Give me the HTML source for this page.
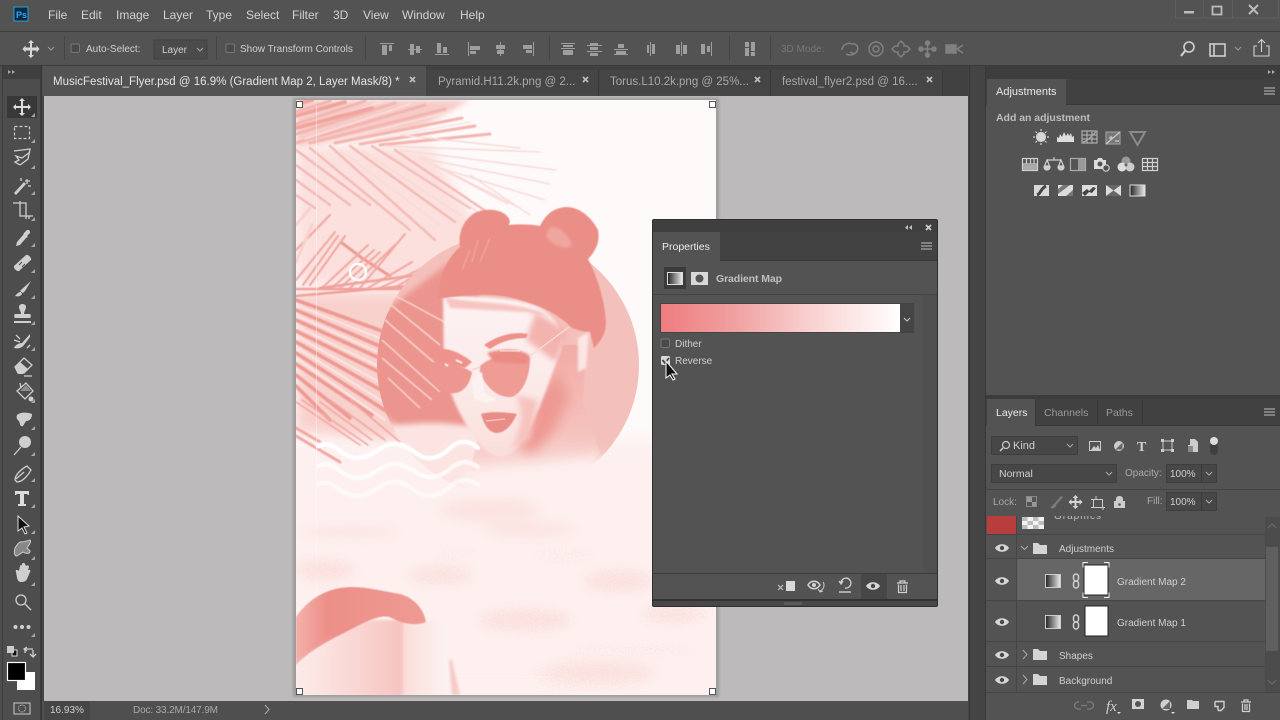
<!DOCTYPE html>
<html><head><meta charset="utf-8"><title>Photoshop</title>
<style>
html,body{margin:0;padding:0;background:#535353;width:1280px;height:720px;overflow:hidden}
svg{display:block;position:absolute;left:0;top:0;filter:blur(.3px)}
text{font-family:"Liberation Sans",sans-serif;font-size:10px;fill:#cfcfcf}
.m{font-size:12px;fill:#d2d2d2}
.t{font-size:11.5px;fill:#a8a8a8}
.i{fill:none;stroke:#cfcfcf;stroke-width:1.3}
.f{fill:#cfcfcf;stroke:none}
</style></head><body>
<svg width="1280" height="720" viewBox="0 0 1280 720" xmlns="http://www.w3.org/2000/svg">
<defs>
<filter id="b1" x="-20%" y="-20%" width="140%" height="140%"><feGaussianBlur stdDeviation="1.200"/></filter>
<filter id="b2" x="-30%" y="-30%" width="160%" height="160%"><feGaussianBlur stdDeviation="3"/></filter>
<filter id="b5" x="-50%" y="-50%" width="200%" height="200%"><feGaussianBlur stdDeviation="6"/></filter>
<filter id="b9" x="-50%" y="-50%" width="200%" height="200%"><feGaussianBlur stdDeviation="10"/></filter>
<filter id="s" x="-10%" y="-10%" width="120%" height="120%"><feGaussianBlur stdDeviation=".5"/></filter>
<filter id="sp" x="-40%" y="-60%" width="180%" height="220%">
<feGaussianBlur in="SourceAlpha" stdDeviation="5" result="a"/>
<feTurbulence type="fractalNoise" baseFrequency=".6" numOctaves="2" seed="4" result="n"/>
<feColorMatrix in="n" type="matrix" values="0 0 0 0 .96  0 0 0 0 .74  0 0 0 0 .72  0 0 5 0 -2.300" result="c"/>
<feComposite in="c" in2="a" operator="in"/>
</filter>
<linearGradient id="gm" x1="0" x2="1" y1="0" y2="0"><stop offset="0" stop-color="#f07c7f"/><stop offset=".3" stop-color="#f0a0a0"/><stop offset=".65" stop-color="#fad4d4"/><stop offset="1" stop-color="#fff"/></linearGradient>
<linearGradient id="gr" x1="0" x2="1" y1="0" y2="0"><stop offset="0" stop-color="#222"/><stop offset="1" stop-color="#eee"/></linearGradient>
<linearGradient id="arm" x1="0" x2="1" y1="0" y2="0"><stop offset="0" stop-color="#f4b0aa"/><stop offset=".25" stop-color="#ec8f88"/><stop offset="1" stop-color="#ee9b94"/></linearGradient>
<linearGradient id="leg" x1="0" x2="1" y1="0" y2="0"><stop offset="0" stop-color="#fdeceb"/><stop offset=".45" stop-color="#f9d3cf"/><stop offset=".7" stop-color="#f6c4bf"/><stop offset=".72" stop-color="#fbdedb"/><stop offset="1" stop-color="#fdf2f1"/></linearGradient>
<linearGradient id="face" x1="0" x2="0" y1="0" y2="1"><stop offset="0" stop-color="#fdf3f3"/><stop offset=".5" stop-color="#fcebea"/><stop offset="1" stop-color="#fadfdc"/></linearGradient>
<linearGradient id="neck" x1="0" x2="0" y1="0" y2="1"><stop offset="0" stop-color="#f2aca6"/><stop offset=".6" stop-color="#f5c2bd"/><stop offset="1" stop-color="#fde9e7"/></linearGradient>
<clipPath id="doc"><rect x="296" y="100" width="420" height="595"/></clipPath>
<clipPath id="circ"><circle cx="508" cy="365" r="131"/></clipPath>
<symbol id="eye" viewBox="0 0 14 10" overflow="visible"><path d="M0 5C3 0 11 0 14 5C11 10 3 10 0 5Z" fill="#d8d8d8"/><circle cx="7" cy="5" r="2.2" fill="#4a4a4a"/></symbol>
<symbol id="dot" viewBox="0 0 4 4"><path d="M4 0V4H0Z" fill="#a8a8a8"/></symbol>
</defs>

<!-- chrome backgrounds -->
<rect width="1280" height="720" fill="#535353"/>
<rect y="31" width="1280" height="1" fill="#3d3d3d"/>
<rect y="65" width="1280" height="1" fill="#3a3a3a"/>
<rect y="66" width="1280" height="30" fill="#414141"/>
<rect x="43" y="66" width="383" height="30" fill="#535353"/>
<rect x="426" y="70" width="173" height="26" fill="#454545"/>
<rect x="599" y="70" width="172" height="26" fill="#454545"/>
<rect x="771" y="70" width="172" height="26" fill="#454545"/>
<path d="M598.5 70V96M770.5 70V96M942.5 70V96" stroke="#383838"/>
<rect x="0" y="66" width="43" height="654" fill="#4d4d4d"/>
<rect x="2" y="66" width="1" height="654" fill="#3c3c3c"/>
<rect x="40" y="66" width="2" height="654" fill="#3a3a3a"/>
<rect x="3" y="66" width="37" height="13" fill="#3f3f3f"/>
<path d="M8 70l3 2-3 2zM12 70l3 2-3 2z" fill="#a8a8a8"/>

<!-- canvas -->
<rect x="44" y="96" width="924" height="605" fill="#bcbabb"/>
<rect x="42" y="96" width="2" height="605" fill="#454545"/>
<rect x="968" y="66" width="18" height="654" fill="#444"/>
<rect x="969" y="66" width="1" height="654" fill="#383838"/>
<rect x="985" y="66" width="1" height="654" fill="#383838"/>
<rect x="986" y="66" width="294" height="13" fill="#3d3d3d"/>
<path d="M1268 70l3 2-3 2zM1272 70l3 2-3 2z" fill="#a8a8a8"/>

<!-- document -->
<rect x="293" y="98" width="426" height="599" fill="#9c9c9c" filter="url(#b1)"/>
<g clip-path="url(#doc)">
<rect x="296" y="100" width="420" height="595" fill="#fefafa"/>
<rect x="280" y="440" width="450" height="270" fill="#fdf0ef" filter="url(#b9)"/>
<!-- palm wash -->
<path d="M296 100H470L420 128L296 148Z" fill="#f7cbc7" filter="url(#b2)"/>
<path d="M296 146H430L480 230L440 285H296Z" fill="#fbe0de" filter="url(#b5)"/>
<path d="M296 292H440V425L390 440L296 432Z" fill="#f8d0cc" filter="url(#b5)"/>
<!-- frond top -->
<g fill="none" stroke-linecap="round" filter="url(#s)">
<path stroke="#f3b5b0" stroke-width="3" d="M296 112L330 101M296 124L365 101M296 134L395 103M296 143L425 105M310 143L445 109M335 143L462 118M360 144L475 126M380 145L490 134"/>
<path stroke="#fbe3e1" stroke-width="1.300" d="M296 118L350 101M296 129L382 102M305 139L410 104M325 143L450 112M350 144L470 122"/>
<path stroke="#f8dbd8" stroke-width="1.600" d="M385 146L540 152M400 150L556 170M420 158L550 184M440 168L545 200M400 135L520 148"/>
<path stroke="#f1a49e" stroke-width="4" d="M296 104L312 100M296 116L345 102M296 128L372 108"/>
<path stroke="#f4bab5" stroke-width="2.400" d="M296 150L370 205M296 165L350 205M310 148L410 230M330 146L435 240M350 146L455 222M372 146L470 208M395 150L490 214M296 180L330 205M296 195L315 208"/>
<path stroke="#fad9d6" stroke-width="1.400" d="M420 158L508 204M445 170L520 208M470 175L530 215M340 150L440 225M362 150L460 215M385 152L478 212"/>
</g>
<!-- mid frond -->
<g fill="none" stroke="#f1a7a1" stroke-linecap="round" filter="url(#s)">
<path stroke-width="3" stroke="#ee9a93" d="M342 243L362 258L390 276"/>
<path stroke-width="2" d="M296 250L330 215M296 280L335 232M303 285L338 236M310 285L345 236M322 288L368 245M332 288L374 250M340 288L380 252M350 288L395 245M360 288L405 234M368 288L412 262M380 288L440 260M394 288L460 250M405 288L440 278"/>
<path stroke-width="3" stroke="#f8d2cf" d="M296 225L310 208M296 262L312 225"/>
</g>
<!-- low frond -->
<g fill="none" stroke="#ee9a93" stroke-linecap="round" filter="url(#s)">
<path stroke-width="2.500" stroke="#f0a19b" d="M296 289H440M296 296L440 283M320 288L440 272"/>
<path stroke-width="3.600" d="M296 300L440 352M296 310L440 372M296 320L445 388M296 331L440 402M296 342L430 418M296 353L400 420M296 364L372 415M296 375L350 418M296 386L330 420"/>
<path stroke-width="2" stroke="#fbe5e3" d="M296 305L440 362M296 315L440 380M296 326L440 396M296 336L430 410M296 347L420 425M296 358L385 420"/>
<path stroke-width="1.600" stroke="#f1a7a1" d="M296 402L360 445M302 400L368 445M320 402L372 440M330 400L385 440M350 400L400 442"/>
<path stroke-width="3" stroke="#f1a7a1" d="M296 428L320 442M296 436L340 462"/>
</g>
<rect x="316" y="105" width="1" height="560" fill="#fff" opacity=".4"/>
<rect x="316" y="676" width="240" height="1" fill="#fff" opacity=".3"/>
<!-- circle -->
<circle cx="508" cy="365" r="131" fill="#f4c0bb"/>
<g clip-path="url(#circ)">
<path d="M450 262L372 320V405L400 428H470L480 270Z" fill="#ec958e" filter="url(#b2)"/>
<g stroke="#f8d4d1" stroke-width="1.500" fill="none" filter="url(#s)"><path d="M385 300L440 345M385 320L445 372M382 340L440 392M382 358L432 400M388 378L420 408M396 296L450 325"/></g>
<path d="M370 430C410 420 470 420 500 436L510 500H370Z" fill="#fbe4e2" filter="url(#b2)"/>
</g>
<circle cx="358" cy="272" r="8" fill="none" stroke="#fff" stroke-width="2.400" opacity=".95"/>
<!-- neck / chest -->
<path d="M530 345L586 345L583 400L600 453L575 478L520 490L470 470L478 440L510 430Z" fill="url(#neck)" filter="url(#s)"/>
<path d="M470 470L600 456L640 475V510H440Z" fill="#fdf0ef" filter="url(#b5)"/>
<path d="M532 454L552 434L570 398L558 372L532 400L518 446Z" fill="#ee9a93" filter="url(#b5)"/>
<!-- face -->
<path d="M443 294C470 298 515 296 540 308C556 318 566 332 560 352C548 385 535 425 517 448C505 462 490 458 478 442C460 418 450 395 444 370Z" fill="url(#face)" filter="url(#b1)"/>
<path d="M445 297C470 304 520 300 548 316L525 312L450 308Z" fill="#f6c5c1" filter="url(#b1)"/>
<path d="M536 312L568 332L556 362L526 340Z" fill="#f3b4af" filter="url(#b2)"/>
<path d="M515 395C525 410 522 430 510 450L530 440L538 400Z" fill="#f6c3be" filter="url(#b2)"/>
<!-- hair -->
<path d="M438 298C440 275 447 258 460 247C458 235 462 222 473 214C482 208 500 208 507 216C511 220 510 224 508 225C518 224 530 224 540 226C545 216 552 208 566 207C580 207 592 218 598 230C600 240 597 250 588 259C596 275 604 295 606 322C606 334 600 342 594 348L590 332C582 332 578 330 572 328C560 316 545 307 520 300C495 292 465 295 445 298Z" fill="#eb8e87" filter="url(#s)"/>
<path d="M549 228C556 224 568 232 572 246C564 250 553 246 546 236Z" fill="#f3b0aa" opacity=".7" filter="url(#b1)"/>
<path d="M472 262L478 240M480 262L490 238M462 270L470 250" stroke="#f2aaa4" stroke-width="1.200" fill="none" filter="url(#s)"/>
<!-- eyes/brow -->
<path d="M484 345C496 336 514 331 528 334L526 338C512 338 500 342 490 349Z" fill="#ee9189" filter="url(#s)"/>
<path d="M433 350C445 346 460 352 472 362L465 368L440 362Z" fill="#ee938c" filter="url(#s)"/>
<!-- glasses -->
<path d="M480 366C495 352 520 355 530 358C530 375 524 392 512 397C498 398 486 388 480 372Z" fill="#ef9c95" filter="url(#s)"/>
<path d="M428 364C440 358 460 365 472 372C470 385 462 395 450 393C438 392 430 378 428 364Z" fill="#ee9690" filter="url(#s)"/>
<path d="M487 353C498 349 520 347 530 356L527 364L494 362Z" fill="#ea8b84" filter="url(#b1)"/>
<path d="M530 356L569 327" stroke="#f9dbd8" stroke-width="1.300"/>
<path d="M472 370L480 367" stroke="#f8d8d5" stroke-width="2"/>
<path d="M500 351H520" stroke="#fff" stroke-width=".8"/>
<path d="M456 360l6 3M445 364l3 2" stroke="#fff" stroke-width="1.800" filter="url(#s)"/>
<!-- nose + lips -->
<path d="M472 378L482 372L484 392L497 400L485 403L474 398Z" fill="#fdf2f2" filter="url(#s)"/>
<path d="M481 414C490 411 505 412 517 414C512 425 505 433 496 433C488 432 484 424 481 414Z" fill="#ea8d86" filter="url(#s)"/>
<path d="M486 421L505 419" stroke="#f8cbc7" stroke-width="1.200"/>
<!-- ear -->
<path d="M578 338L589 332L586 368L578 372Z" fill="#fbe7e5" filter="url(#b1)"/>
<!-- waves -->
<g fill="none" stroke="#fff" stroke-width="4.500" stroke-linecap="round" filter="url(#s)">
<path d="M318 446C335 438 340 458 357 458C374 458 382 442 397 444C412 446 418 460 432 458C448 456 452 440 466 442C472 443 476 446 478 448"/>
<path stroke-opacity=".75" d="M318 466C335 458 340 478 357 478C374 478 382 462 397 464C412 466 418 478 432 477C448 476 452 462 466 462C472 463 476 466 478 467"/>
<path stroke-opacity=".6" d="M318 484C335 478 340 496 357 496C374 496 382 480 397 482C412 484 418 498 432 496C448 494 452 480 466 480C472 481 476 484 478 485"/>
</g>
<!-- sand soft -->
<g fill="#fbe3e1" filter="url(#b5)">
<ellipse cx="490" cy="510" rx="50" ry="12"/><ellipse cx="530" cy="530" rx="45" ry="7"/><ellipse cx="350" cy="532" rx="50" ry="5"/>
<ellipse cx="325" cy="570" rx="30" ry="10"/><ellipse cx="440" cy="575" rx="32" ry="8"/><ellipse cx="618" cy="581" rx="34" ry="10"/>
<ellipse cx="525" cy="620" rx="45" ry="10"/><ellipse cx="672" cy="614" rx="28" ry="7"/><ellipse cx="600" cy="672" rx="55" ry="10"/>
</g>
<!-- sand speckle -->
<g fill="#000" filter="url(#sp)">
<ellipse cx="325" cy="570" rx="26" ry="10"/><ellipse cx="442" cy="575" rx="30" ry="9"/><ellipse cx="618" cy="581" rx="34" ry="11"/>
<ellipse cx="525" cy="620" rx="46" ry="12"/><ellipse cx="676" cy="614" rx="34" ry="9"/><ellipse cx="630" cy="650" rx="66" ry="4"/>
<ellipse cx="590" cy="675" rx="60" ry="12"/><ellipse cx="565" cy="555" rx="28" ry="5"/><ellipse cx="455" cy="553" rx="22" ry="3"/>
</g>
<!-- arm -->
<rect x="296" y="620" width="151" height="76" fill="url(#leg)" filter="url(#b1)"/>
<path d="M296 617C308 600 325 588 350 587C370 587 385 592 400 594C415 598 424 610 426 622C416 626 402 624 392 618C380 612 360 625 340 635C320 645 305 655 296 665Z" fill="url(#arm)" filter="url(#s)"/>
<path d="M296 665L340 635L296 690Z" fill="#fce6e4" opacity=".5" filter="url(#b2)"/>
<path d="M449 660L452 695H460L452 660Z" fill="#f7cac6" filter="url(#b1)"/>
</g>
<g fill="#fff" stroke="#555" stroke-width="1"><rect x="296.500" y="101.500" width="6" height="6"/><rect x="709.500" y="101.500" width="6" height="6"/><rect x="296.500" y="688.500" width="6" height="6"/><rect x="709.500" y="688.500" width="6" height="6"/></g>

<!-- menu -->
<rect x="14" y="7" width="14" height="14" fill="#0c2a40" stroke="#2a9fd8"/>
<text x="16" y="18" style="font-size:9px;fill:#31a8ff;font-weight:bold">Ps</text>
<text class="m" x="48" y="19">File</text><text class="m" x="81" y="19">Edit</text><text class="m" x="116" y="19">Image</text><text class="m" x="163" y="19">Layer</text><text class="m" x="206" y="19">Type</text><text class="m" x="246" y="19">Select</text><text class="m" x="292" y="19">Filter</text><text class="m" x="333" y="19">3D</text><text class="m" x="363" y="19">View</text><text class="m" x="402" y="19">Window</text><text class="m" x="460" y="19">Help</text>
<!-- window buttons -->
<path d="M1175.500 0V18H1279M1203.500 0V18M1232.500 0V18M1278.500 0V18" stroke="#5f5f5f" fill="none"/>
<rect x="1184" y="11" width="10" height="2.500" fill="#bbb"/>
<rect x="1212.500" y="6.500" width="9" height="8" fill="none" stroke="#bbb" stroke-width="1.800"/>
<path d="M1249 5L1258 14M1258 5L1249 14" stroke="#bbb" stroke-width="2"/>

<!-- options bar -->
<path d="M31 40l3 3h-2v4.500h4.500v-2l3 3.500-3 3.500v-2H32v4.500h2l-3 3-3-3h2v-4.500h-4.500v2l-3-3.500 3-3.500v2H30V43h-2z" fill="#d8d8d8"/>
<path d="M48 47l3 3 3-3" fill="none" stroke="#999"/>
<path d="M64.500 36V60M216.500 36V60M365.500 36V60M549.500 36V60M729.500 36V60M770.500 36V60" stroke="#444"/>
<rect x="71" y="44" width="8.500" height="8.500" rx="1.500" fill="#4a4a4a" stroke="#777"/>
<text x="86" y="52">Auto-Select:</text>
<rect x="154" y="40" width="53" height="19" fill="#4b4b4b" stroke="#424242"/>
<text x="162" y="53">Layer</text>
<path d="M197 48l3 3 3-3" fill="none" stroke="#aaa"/>
<rect x="226" y="44" width="8.500" height="8.500" rx="1.500" fill="#4a4a4a" stroke="#777"/>
<text x="240" y="52">Show Transform Controls</text>
<g fill="#9e9e9e" stroke="none">
<path d="M380 43h14v1h-14zM382 45h5v10h-5zM389 45h3v6h-3z"/>
<path d="M408 49h14v1h-14zM410 44h4v11h-4zM416 46h4v7h-4z"/>
<path d="M435 54h14v1h-14zM437 43h4v10h-4zM443 47h4v6h-4z"/>
<path d="M468 42h1v14h-1zM470 46h10v4h-10zM470 51h6v3h-6z"/>
<path d="M500 42h1v14h-1zM496 45h9v4h-9zM497 50h7v4h-7z"/>
<path d="M533 42h1v14h-1zM523 45h9v4h-9zM526 50h6v3h-6z"/>
<path d="M561 43h14v1h-14zM561 48h14v1h-14zM563 45h10v2h-10zM563 50h10v5h-10z"/>
<path d="M587 45h15v1h-15zM587 51h15v1h-15zM590 43h8v2h-8zM590 47h8v3h-8zM590 53h8v3h-8z"/>
<path d="M614 54h14v1h-14zM614 49h14v1h-14zM618 44h6v4h-6zM616 51h10v3h-10z"/>
<path d="M650 42h1v14h-1zM652 44h3v10h-3zM647 45h2v8h-2z"/>
<path d="M681 42h1v14h-1zM676 45h4v9h-4zM683 45h4v9h-4z"/>
<path d="M711 42h1v14h-1zM701 44h4v10h-4zM707 46h3v6h-3z"/>
<path d="M745 42h4v5h-4zM745 48h4v8h-4zM751 42h4v9h-4zM751 52h4v4h-4z"/>
</g>
<text x="781" y="52" style="fill:#777">3D Mode:</text>
<g fill="none" stroke="#808080" stroke-width="1.500">
<path d="M842 50c0-5 6-8 10-6 5-1 7 4 5 7-2 4-8 5-11 3M850 52c3 2 5 2 7 0"/>
<circle cx="876" cy="49" r="7"/><circle cx="876" cy="49" r="3"/>
<path d="M901 41l3 3v2h3l3 3-3 3h-3v2l-3 3-3-3v-2h-3l-3-3 3-3h3v-2z"/>
<path d="M923 49h9M927.500 45v8"/><circle cx="927.500" cy="43" r="2" fill="#808080"/><circle cx="921" cy="49" r="2" fill="#808080"/><circle cx="934" cy="49" r="2" fill="#808080"/><circle cx="927.500" cy="55" r="2" fill="#808080"/>
<rect x="946" y="45" width="10" height="8" fill="#808080"/><path d="M957 49l6-4M957 49l6 4"/>
</g>
<g fill="none" stroke="#d0d0d0" stroke-width="1.600">
<circle cx="1189" cy="47" r="5"/><path d="M1185 51l-4 5" stroke-width="2.200"/>
<rect x="1210" y="44" width="15" height="12" stroke="#ccc"/><path d="M1214 44v12"/>
<path d="M1235 47l3 3 3-3" stroke="#999" stroke-width="1"/>
<path d="M1257 46h-3v10h15v-10h-3M1261.500 52v-12M1258 43l3.500-3.500 3.500 3.500" stroke-width="1.100"/>
</g>

<!-- tabs -->
<text x="53" y="85" style="font-size:11.500px;fill:#e4e4e4">MusicFestival_Flyer.psd @ 16.9% (Gradient Map 2, Layer Mask/8) *</text>
<text x="438" y="85" class="t">Pyramid.H11.2k.png @ 2...</text>
<text x="610" y="85" class="t">Torus.L10.2k.png @ 25%...</text>
<text x="782" y="85" class="t">festival_flyer2.psd @ 16....</text>
<g stroke="#bbb" stroke-width="1.800"><path d="M410 77l5 5m0-5l-5 5"/><path d="M583 77l5 5m0-5l-5 5"/><path d="M755 77l5 5m0-5l-5 5"/><path d="M927 77l5 5m0-5l-5 5"/></g>

<!-- toolbar -->
<rect x="7" y="96" width="30" height="22" fill="#383838"/>
<path d="M22 98l3 3h-2v5h5v-2l3 3-3 3v-2h-5v5h2l-3 3-3-3h2v-5h-5v2l-3-3 3-3v2h5v-5h-2z" fill="#ddd"/>
<rect x="14.500" y="126.500" width="15" height="12" fill="none" stroke="#ccc" stroke-dasharray="3 2" stroke-width="1.200"/>
<path d="M14 151l16-2-2 10-8 6m0 0l-5-3 4-2-3-4 6 2 8-6" class="i"/>
<path d="M14 193l10-11 2 2-10 11z" class="f"/><path d="M27 179v5M25 181h5M31 186h-3M21 178v3" class="i" stroke-width="1"/>
<path d="M16 203h4v13h13M26 219v-16h-13M20 201v3M29 216v3" class="i" stroke-width="2.200"/>
<path d="M26 231c2-3 6 1 3 3l-2 2 1 1-2 1-6 7-4 1 1-4 6-7 1-2z" class="f"/>
<path d="M14 266l12-11c2-1 6 3 5 5l-12 11c-2 1-6-3-5-5z" class="f"/><path d="M19 265l3-3M22 267l3-3" stroke="#555" stroke-width="1.200"/>
<path d="M31 281l-9 8-2 2 3 2 2-2zM21 292c-3 0-4 2-6 4 3 1 6 0 7-2z" class="f"/>
<path d="M19 307c0-4 7-4 7 0 0 3-2 4-2 7h6c1 0 1 4 0 4H15c-1 0-1-4 0-4h6c0-3-2-4-2-7zM14 321h17v2H14z" class="f"/>
<path d="M30 334l-8 9 2 2 6-8zM22 343c-3 0-7 2-8 5 4 1 8 0 10-3z" class="f"/><path d="M14 340l6 2M16 335l4 4M27 348l3-3" class="i" stroke-width=".8"/>
<path d="M15 367l9-9 8 7-8 8h-6zM24 376h8" class="i"/><path d="M15 367l5-5 8 7-5 5h-5z" class="f"/>
<path d="M17 391l9-8 7 8-8 8zM21 388l-1-5" class="i"/><path d="M20 391l6-6 5 6z" class="f" opacity=".5"/><circle cx="31" cy="399" r="2.500" class="f"/>
<path d="M17 415c3-3 10-3 15-1 0 4-2 7-6 7l-3 5c-2 1-3-1-3-2l-1-3c-2-1-3-4-2-6z" class="f"/>
<circle cx="25" cy="442" r="6" class="f"/><path d="M21 447l-7 8" class="i" stroke-width="2"/>
<path d="M15 480c0-6 8-12 12-14l4 4c-2 4-8 12-14 12zM16 479l8-7" class="i"/>
<path d="M15 491h14v4h-1l-1-1h-3v10h2v2H18v-2h2v-10h-3l-1 1h-1z" fill="#ddd"/>
<path d="M18 516v15l4-3 3 6 2-1-3-6 5-1z" fill="#111" stroke="#ddd"/>
<path d="M15 548c3-5 5-7 8-6l7-2c2 2-2 6-3 8l3 3c0 3-4 3-7 1l-6 4c-3 0-3-4-2-8z" fill="#888" stroke="#ccc"/>
<path d="M16 572c-1-2 1-3 3-1l1-5c1-2 2-1 2 0v-2c1-2 3-1 3 0l1 2c1-1 3-1 3 1l-1 3c2-1 3 1 2 2l-3 7c-1 2-3 3-6 3-4 0-4-5-5-10z" class="f"/>
<circle cx="21" cy="600" r="5" class="i" stroke-width="1.500"/><path d="M25 604l6 6" class="i" stroke-width="2"/>
<circle cx="15.500" cy="627" r="2" class="f"/><circle cx="22" cy="627" r="2" class="f"/><circle cx="28.500" cy="627" r="2" class="f"/>
<g><use href="#dot" x="31" y="113" width="4" height="4"/><use href="#dot" x="31" y="139" width="4" height="4"/><use href="#dot" x="31" y="165" width="4" height="4"/><use href="#dot" x="31" y="191" width="4" height="4"/><use href="#dot" x="31" y="217" width="4" height="4"/><use href="#dot" x="31" y="243" width="4" height="4"/><use href="#dot" x="31" y="269" width="4" height="4"/><use href="#dot" x="31" y="295" width="4" height="4"/><use href="#dot" x="31" y="321" width="4" height="4"/><use href="#dot" x="31" y="347" width="4" height="4"/><use href="#dot" x="31" y="399" width="4" height="4"/><use href="#dot" x="31" y="426" width="4" height="4"/><use href="#dot" x="31" y="452" width="4" height="4"/><use href="#dot" x="31" y="478" width="4" height="4"/><use href="#dot" x="31" y="504" width="4" height="4"/><use href="#dot" x="31" y="530" width="4" height="4"/><use href="#dot" x="31" y="556" width="4" height="4"/><use href="#dot" x="31" y="582" width="4" height="4"/><use href="#dot" x="31" y="633" width="4" height="4"/></g>
<rect x="12" y="650" width="5" height="6" fill="#111" stroke="#ddd"/><rect x="7" y="646" width="7" height="7" fill="#ccc"/>
<path d="M25 653v-4h8M27 647l-3 2 3 2M33 650v6M30 654l3 3 3-3" class="i"/>
<rect x="17" y="672" width="18" height="18" fill="#fff"/>
<rect x="7.500" y="662.500" width="18" height="18" fill="#000" stroke="#fff" stroke-width="1.200"/>
<rect x="14" y="703" width="16" height="11" fill="none" stroke="#ccc"/><circle cx="22" cy="708.500" r="3.500" fill="none" stroke="#ccc" stroke-dasharray="1 1"/>

<!-- status bar -->
<rect x="44" y="701" width="924" height="19" fill="#4f4f4f"/>
<rect x="44" y="701" width="46" height="19" fill="#464646"/>
<text x="50" y="713">16.93%</text>
<text x="133" y="713" style="fill:#aaa" textLength="85">Doc: 33.2M/147.9M</text>
<path d="M265 705l4 4.500-4 4.500" fill="none" stroke="#aaa"/>

<!-- adjustments panel -->
<rect x="986" y="79" width="294" height="26" fill="#414141"/>
<rect x="987" y="79" width="79" height="26" fill="#535353"/>
<rect x="1066" y="104" width="214" height="1" fill="#383838"/>
<text x="996" y="95" style="font-size:11px;fill:#e8e8e8">Adjustments</text>
<path d="M1264 88h11M1264 91h11M1264 94h11" stroke="#c0c0c0"/>
<text x="996" y="121" style="font-size:10.500px;font-weight:bold;fill:#bdbdbd" textLength="94">Add an adjustment</text>
<g fill="none" stroke="#d0d0d0" stroke-width="1.200">
<circle cx="1041" cy="137" r="4.500" fill="#d8d8d8"/><path d="M1041 129v2M1041 143v2M1033 137h2M1047 137h2M1035.500 131.500l1.500 1.500M1045 141l1.500 1.500M1046.500 131.500l-1.500 1.500M1037 141l-1.500 1.500"/>
<path d="M1057 142v-5l2 1 1-4 2 3 2-5 2 4 2-3 1 3 2-3 1 4 2-1v6z" fill="#ddd" stroke="none"/>
<path d="M1082 131h15v12h-15zM1087 131v12M1092 131v12M1082 135h15M1082 139h15M1083 142c5-1 8-6 13-10" stroke="#aaa"/>
<path d="M1106 132h14v12h-14z" fill="#777" stroke="#999"/><path d="M1106 144l14-12M1109 138h4M1111 136v4M1115 141h4" stroke="#ccc"/>
<path d="M1130 132h15l-7.500 13z" stroke="#8a8a8a" stroke-width="2"/>
<rect x="1022.500" y="158.500" width="15" height="12"/><path d="M1022 164h16M1026.500 158v6M1030.500 158v6M1034 158v6"/><path d="M1023 165h14v5h-14z" fill="#aaa" stroke="none"/>
<path d="M1054 157v3M1047 160h14M1047 160l-2.500 6h5zM1061 160l-2.500 6h5z"/><path d="M1044 167c0 4 6 4 6 0zM1058 167c0 4 6 4 6 0z" fill="#ccc"/>
<rect x="1070.500" y="158.500" width="15" height="12" stroke="#aaa"/><rect x="1078" y="159" width="7" height="11" fill="#999" stroke="none"/>
<path d="M1094 160h3l1-2h4l1 2h3v9h-12z" fill="#ddd" stroke="none"/><circle cx="1100" cy="164" r="2.500" fill="#555" stroke="none"/><circle cx="1106" cy="168" r="3.200" fill="#535353"/>
<circle cx="1126" cy="161" r="4.500" fill="#999" stroke="none"/><circle cx="1122" cy="167" r="4.500" fill="#ddd" stroke="none"/><circle cx="1130" cy="167" r="4.500" fill="#ccc" stroke="none"/><circle cx="1126" cy="165" r="1.500" fill="#666" stroke="none"/>
<rect x="1142.500" y="158.500" width="15" height="12"/><path d="M1142 162.500h16M1142 166.500h16M1147.500 158v12M1152.500 158v12"/>
</g>
<rect x="1034" y="185" width="15" height="11" fill="#d8d8d8"/><path d="M1037 195c4-1 3-6 9-9" stroke="#444" stroke-width="3" fill="none"/>
<rect x="1058" y="185" width="15" height="11" fill="#ddd"/><path d="M1058 194l12-9h-7l-5 4zM1066 196l7-6v6z" fill="#777"/>
<rect x="1082" y="185" width="15" height="11" fill="#ddd"/><path d="M1082 193l5-4 2 2 4-4 3 1-4 5-3-1-4 4z" fill="#444"/>
<rect x="1106" y="185" width="15" height="11" fill="#ddd"/><path d="M1106 185h15l-7.500 5.500zM1106 196h15l-7.500-5.500z" fill="#666"/>
<rect x="1130" y="185" width="15" height="11" fill="url(#gr)" stroke="#ddd"/>

<!-- panel divider -->
<rect x="986" y="395" width="294" height="4" fill="#3c3c3c"/>

<!-- layers panel -->
<rect x="986" y="399" width="294" height="27" fill="#414141"/>
<rect x="987" y="399" width="48" height="27" fill="#535353"/>
<path d="M1035.500 400V426M1097.500 400V426M1142.500 400V426" stroke="#383838"/>
<rect x="1035" y="425" width="245" height="1" fill="#383838"/>
<text x="996" y="416" style="font-size:10.500px;fill:#eaeaea">Layers</text>
<text x="1044" y="416" style="font-size:10.500px;fill:#999">Channels</text>
<text x="1106" y="416" style="font-size:10.500px;fill:#999">Paths</text>
<path d="M1264 409h11M1264 412h11M1264 415h11" stroke="#c0c0c0"/>
<rect x="991.500" y="436.500" width="86" height="18" fill="#474747" stroke="#3e3e3e"/>
<circle cx="1006" cy="445" r="3.500" fill="none" stroke="#ccc" stroke-width="1.200"/><path d="M1003 448l-3 3" stroke="#ccc" stroke-width="1.500"/>
<text x="1013" y="449" style="font-size:11px">Kind</text>
<path d="M1067 444l3 3 3-3" fill="none" stroke="#aaa"/>
<rect x="1089.500" y="441.500" width="11" height="9" fill="none" stroke="#ccc"/><path d="M1091 450l3-4 2 2 2-3 2 5z" fill="#ccc"/>
<circle cx="1119" cy="446" r="5" fill="#ccc"/><path d="M1115.500 449.500l7-7v7z" fill="#666"/>
<text x="1137" y="451" style="font-size:14px;font-weight:bold;font-family:'Liberation Serif',serif;fill:#d0d0d0">T</text>
<rect x="1163" y="441" width="9" height="9" fill="none" stroke="#ccc"/><path d="M1161 439h3v3h-3zM1171 439h3v3h-3zM1161 449h3v3h-3zM1171 449h3v3h-3z" fill="#ccc"/>
<path d="M1190 439h5l3 3v10h-6v-4h-4v-3h2z" fill="#ccc"/><rect x="1188" y="446" width="5" height="6" fill="#888"/>
<rect x="1210" y="443" width="8" height="12" rx="4" fill="#404040"/><circle cx="1214" cy="441" r="4" fill="#ddd"/>
<rect x="991.500" y="464.500" width="125" height="18" fill="#474747" stroke="#3e3e3e"/>
<text x="999" y="477" style="font-size:10.500px">Normal</text>
<path d="M1106 472l3 3 3-3" fill="none" stroke="#aaa"/>
<text x="1125" y="476" style="fill:#a8a8a8">Opacity:</text>
<rect x="1166.500" y="464.500" width="50" height="18" fill="#474747" stroke="#3e3e3e"/><path d="M1201.500 465v17" stroke="#3a3a3a"/>
<text x="1170" y="477">100%</text><path d="M1206 472l3 3 3-3" fill="none" stroke="#aaa"/>
<rect x="986" y="489" width="294" height="1" fill="#444"/>

<!-- layers list -->
<rect x="987" y="516" width="29" height="18" fill="#b83d3d"/>
<text x="1054" y="519" style="fill:#bbb" textLength="47">Graphics</text>
<rect x="1022" y="517" width="22" height="12" fill="#f2f2f2"/>
<path d="M1022 517h5.500v4h-5.500zM1033 517h5.500v4h-5.500zM1027.500 521h5.500v4h-5.500zM1038.500 521h5.500v4h-5.500zM1022 525h5.500v4h-5.500zM1033 525h5.500v4h-5.500z" fill="#bdbdbd"/>
<rect x="986" y="490" width="294" height="26" fill="#535353"/>
<text x="993" y="505" style="fill:#a8a8a8">Lock:</text>
<rect x="1026.500" y="496.500" width="10" height="10" fill="none" stroke="#888"/><path d="M1027 497h5v5h-5zM1032 502h4v4h-4z" fill="#999"/>
<path d="M1061 496l-6 7-2 2-3 3c3 1 6 0 6-3l7-8z" fill="#7d7d7d"/>
<path d="M1075.500 495l3 3h-2v3h3v-2l3 3-3 3v-2h-3v3h2l-3 3-3-3h2v-3h-3v2l-3-3 3-3v2h3v-3h-2z" fill="#d4d4d4"/>
<path d="M1093.500 499.500h9v8h-9zM1091 499.500h2M1096 496v3M1103 508v2M1091 507.500h14" fill="none" stroke="#ccc"/>
<path d="M1116 501v-2c0-4 7-4 7 0v2h2v7h-11v-7z" fill="#ccc"/><circle cx="1119.500" cy="504.500" r="1.300" fill="#555"/>
<text x="1147" y="504" style="fill:#a8a8a8">Fill:</text>
<rect x="1166.500" y="492.500" width="50" height="18" fill="#474747" stroke="#3e3e3e"/><path d="M1201.500 493v17" stroke="#3a3a3a"/>
<text x="1170" y="505">100%</text><path d="M1206 500l3 3 3-3" fill="none" stroke="#aaa"/>
<rect x="1017" y="559" width="248" height="41" fill="#666"/>
<path d="M986 534.500H1265M986 558.500H1265M986 600.500H1265M986 641.500H1265M986 666.500H1265M986 692.500H1280M1016.500 516V692" stroke="#454545"/>
<use href="#eye" x="995" y="543" width="14" height="10"/>
<use href="#eye" x="995" y="576" width="14" height="10"/>
<use href="#eye" x="995" y="617" width="14" height="10"/>
<use href="#eye" x="995" y="650" width="14" height="10"/>
<use href="#eye" x="995" y="675" width="14" height="10"/>
<path d="M1021 546l3.500 3.500 3.500-3.500" fill="none" stroke="#aaa"/>
<path d="M1033 543h5l2 2h7v9h-14z" fill="#d4d4d4"/>
<text x="1059" y="552">Adjustments</text>
<rect x="1045.500" y="574.500" width="15" height="13" fill="url(#gr)" stroke="#ccc"/>
<rect x="1045.500" y="615.500" width="15" height="13" fill="url(#gr)" stroke="#ccc"/>
<g fill="none" stroke="#d0d0d0" stroke-width="1.500"><rect x="1073.500" y="574" width="5" height="7" rx="2.500"/><rect x="1073.500" y="581" width="5" height="7" rx="2.500"/><rect x="1073.500" y="615" width="5" height="7" rx="2.500"/><rect x="1073.500" y="622" width="5" height="7" rx="2.500"/></g>
<rect x="1084" y="565" width="24" height="30" fill="#fff" stroke="#222"/>
<path d="M1088 562.500h-5v5M1104 562.500h5v5M1088 597.500h-5v-5M1104 597.500h5v-5" fill="none" stroke="#eee"/>
<rect x="1085" y="606" width="23" height="30" fill="#fff" stroke="#222"/>
<text x="1117" y="585">Gradient Map 2</text>
<text x="1117" y="626">Gradient Map 1</text>
<path d="M1023 650l4 4.500-4 4.500M1023 675l4 4.500-4 4.500" fill="none" stroke="#aaa"/>
<path d="M1033 649h5l2 2h7v9h-14zM1033 674h5l2 2h7v9h-14z" fill="#d4d4d4"/>
<text x="1059" y="659">Shapes</text>
<text x="1059" y="684">Background</text>
<!-- scrollbar -->
<rect x="1265" y="517" width="15" height="175" fill="#4c4c4c"/>
<rect x="1266" y="547" width="12" height="104" fill="#5f5f5f"/>
<path d="M1268 528l4-4 4 4M1268 680l4 4 4-4" fill="none" stroke="#6f6f6f"/>
<!-- layers footer -->
<path d="M1079 702h-1a3.500 3.500 0 0 0 0 7h3M1087 702h3a3.500 3.500 0 0 1 0 7h-3M1081 705.500h6" fill="none" stroke="#7c7c7c" stroke-width="1.300"/>
<text x="1106" y="711" style="font-family:'Liberation Serif',serif;font-style:italic;font-size:15px;fill:#d0d0d0">fx</text>
<rect x="1132" y="699" width="12" height="10" fill="#d4d4d4"/><circle cx="1138" cy="704" r="3" fill="#555"/>
<circle cx="1166" cy="705" r="5.500" fill="#d0d0d0"/><path d="M1162 709l8-8v8z" fill="#666"/>
<path d="M1187 700h5l1 1h6v8h-12z" fill="#d0d0d0"/>
<path d="M1215 701.500h9v6l-3 3h-3M1215 701.500v5h3v4" fill="none" stroke="#d0d0d0" stroke-width="1.400"/>
<path d="M1241 702h10M1244 702v-2h4v2M1242.500 703.500v8h7v-8M1245 704v6M1247 704v6" fill="none" stroke="#d0d0d0" stroke-width="1.200"/>
<path d="M1117 712h4l-2 2zM1171 712h4l-2 2z" fill="#ddd"/>

<!-- properties panel -->
<rect x="652" y="219" width="286" height="388" rx="2" fill="#2e2e2e"/>
<rect x="653" y="220" width="284" height="12" fill="#3f3f3f"/>
<rect x="653" y="232" width="284" height="29" fill="#424242"/>
<rect x="653" y="232" width="67" height="29" fill="#535353"/>
<rect x="653" y="261" width="284" height="339" fill="#535353"/>
<rect x="720" y="260" width="217" height="1" fill="#383838"/>
<rect x="923" y="295" width="14" height="278" fill="#505050"/>
<rect x="653" y="294" width="284" height="1" fill="#444"/>
<path d="M908 225l-3 2.500 3 2.500zM912 225l-3 2.500 3 2.500z" fill="#c0c0c0"/>
<path d="M926 225l5 5m0-5l-5 5" stroke="#ccc" stroke-width="1.800"/>
<text x="662" y="250" style="font-size:10.500px;fill:#eaeaea">Properties</text>
<path d="M921 243h11M921 246h11M921 249h11" stroke="#c0c0c0"/>
<rect x="664" y="267" width="22" height="22" fill="#3b3b3b"/>
<rect x="667.500" y="272.500" width="15" height="12" fill="url(#gr)" stroke="#ddd"/>
<rect x="691" y="272" width="17" height="13" fill="#d8d8d8"/><circle cx="699.500" cy="278.500" r="4" fill="#555"/>
<text x="716" y="282" style="font-size:10.500px;font-weight:bold;fill:#c0c0c0" textLength="66">Gradient Map</text>
<rect x="660.500" y="303.500" width="253" height="29" fill="#454545" stroke="#444"/>
<rect x="661" y="304" width="239" height="28" fill="url(#gm)"/>
<path d="M904 318l3 3 3-3" fill="none" stroke="#ccc"/>
<rect x="661" y="339" width="8.500" height="8.500" rx="1.500" fill="#4a4a4a" stroke="#777"/>
<text x="675" y="347">Dither</text>
<rect x="661" y="356" width="9" height="9" rx="1.500" fill="#d8d8d8"/>
<path d="M662.500 360l2.500 3 4-5" fill="none" stroke="#444" stroke-width="1.800"/>
<text x="675" y="364">Reverse</text>
<path d="M666 361v17l4-3 3 5 2-1-3-5h5z" fill="#111" stroke="#eee" stroke-width="1.100"/>
<rect x="653" y="573" width="284" height="1" fill="#3c3c3c"/>
<rect x="861" y="574" width="26" height="25" fill="#474747"/>
<rect x="653" y="599" width="284" height="2" fill="#323232"/>
<rect x="653" y="601" width="284" height="5" fill="#484848"/>
<path d="M785 602v3M787 602v3M789 602v3M791 602v3M793 602v3M795 602v3M797 602v3M799 602v3M801 602v3" stroke="#6a6a6a" stroke-width="1"/>
<rect x="786" y="581" width="9" height="10" fill="#d8d8d8"/><path d="M778 585l5 5m0-5l-5 5" stroke="#ccc" fill="none"/>
<path d="M808 585c3-5 9-5 12 0-3 5-9 5-12 0z" fill="none" stroke="#d4d4d4" stroke-width="1.500"/><circle cx="814" cy="585" r="2" fill="#d4d4d4"/><path d="M823 582c2 3 1 7-3 9M818 589l2 3 3-1" fill="none" stroke="#ccc"/>
<path d="M842 584l-2 3-2-3M840 587a5 5 0 1 1 4 4" fill="none" stroke="#d0d0d0" stroke-width="1.300" transform="translate(1,-3)"/><path d="M839 592h12" stroke="#d0d0d0" stroke-width="1.400"/>
<use href="#eye" x="866" y="581" width="14" height="10"/>
<path d="M897 583h11M900 583v-2h5v2M898.500 584.500v8h8v-8M901 585v6M904 585v6" fill="none" stroke="#d0d0d0" stroke-width="1.200"/>
</svg>
</body></html>
